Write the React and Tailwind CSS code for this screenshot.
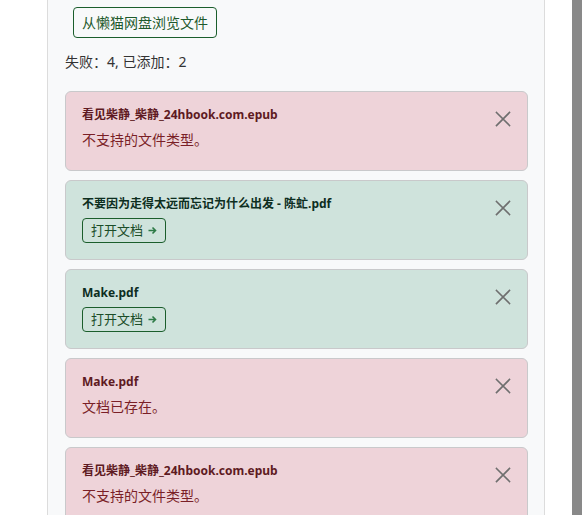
import React from 'react';

const results = [
  { ok: false, name: '看见柴静_柴静_24hbook.com.epub', msg: '不支持的文件类型。' },
  { ok: true, name: '不要因为走得太远而忘记为什么出发 - 陈虻.pdf' },
  { ok: true, name: 'Make.pdf' },
  { ok: false, name: 'Make.pdf', msg: '文档已存在。' },
  { ok: false, name: '看见柴静_柴静_24hbook.com.epub', msg: '不支持的文件类型。' },
];

const CloseIcon = () => (
  <svg width="16" height="16" viewBox="0 0 16 16" fill="none" stroke="#6f6f6f" strokeWidth="1.6" strokeLinecap="square">
    <path d="M1.5 1.5 L14.5 14.5 M14.5 1.5 L1.5 14.5" />
  </svg>
);

const ArrowIcon = () => (
  <svg width="9" height="9" viewBox="0 0 9 9" fill="none" stroke="#2d7a46" strokeWidth="1.6">
    <path d="M0.5 4.5 H7.5 M4.5 1.5 L7.5 4.5 L4.5 7.5" />
  </svg>
);

const ResultCard = ({ item }) => (
  <div
    className={
      'relative h-[80px] shrink-0 rounded-[6px] border border-[#c9c9cb] pl-[16px] pr-12 pt-[14px] ' +
      (item.ok ? 'bg-[#cfe3dc]' : 'bg-[#eed3d9]')
    }
  >
    <div className={'text-[12px] font-bold leading-[18px] ' + (item.ok ? 'text-[#0d2e1f]' : 'text-[#5e1a22]')}>
      {item.name}
    </div>
    {item.ok ? (
      <button className="mt-[5px] flex h-[25px] items-center gap-[5px] rounded-[4px] border border-[#1b5e2c] px-[8px] text-[13px] text-[#1b4d28]">
        打开文档 <ArrowIcon />
      </button>
    ) : (
      <div className="mt-[6px] text-[14px] leading-[20px] text-[#7a1f27]">{item.msg}</div>
    )}
    <button className="absolute right-[16px] top-[19px]">
      <CloseIcon />
    </button>
  </div>
);

export default function App() {
  return (
    <div className="flex h-[515px] overflow-hidden bg-white font-['Noto_Sans','Noto_Sans_CJK_SC',sans-serif]">
      <div className="w-[47px] shrink-0" />
      <div className="flex w-[498px] shrink-0 flex-col border-x border-[#dcdcdc] bg-[#f8f9fa] pl-[17px] pr-[16px]">
        <div className="pt-[7px] pl-[8px]">
          <button className="h-[31px] rounded-[4px] border border-[#1b5e2c] px-[8px] text-[14px] text-[#1e5a2c]">
            从懒猫网盘浏览文件
          </button>
        </div>
        <div className="mt-[14px] text-[14px] leading-[20px] text-[#333]">失败：4, 已添加：2</div>
        <div className="mt-[19px] flex flex-col gap-[9px]">
          {results.map((item, i) => (
            <ResultCard key={i} item={item} />
          ))}
        </div>
      </div>
      <div className="flex-1" />
      <div className="w-[10px] shrink-0 bg-[#898989]" />
    </div>
  );
}
